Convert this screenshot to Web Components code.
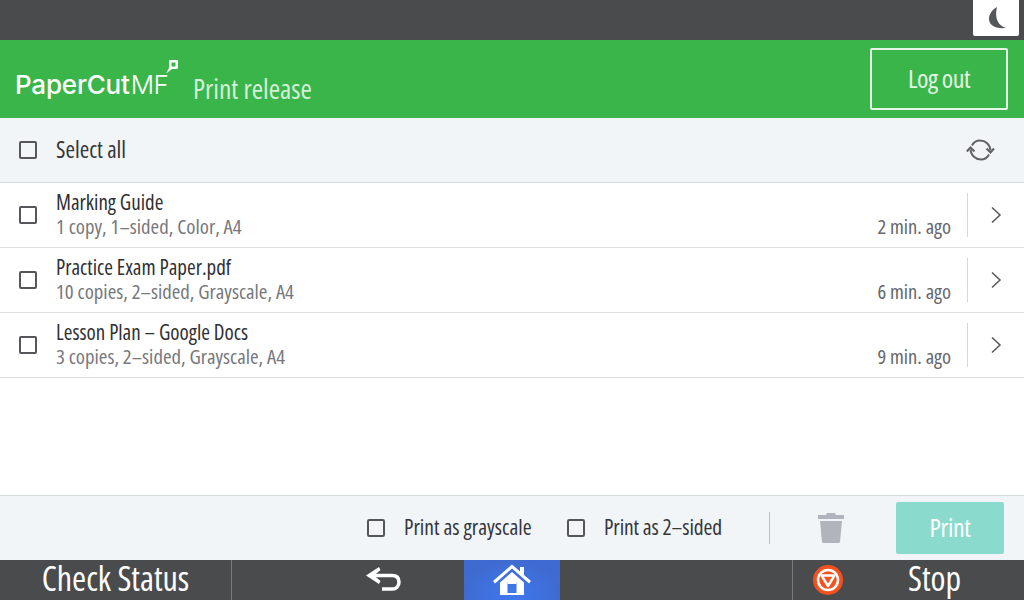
<!DOCTYPE html>
<html>
<head>
<meta charset="utf-8">
<title>Print release</title>
<style>
  html, body { margin: 0; padding: 0; }
  body {
    width: 1024px; height: 600px; overflow: hidden; background: #fff;
    display: flex; flex-direction: column;
    font-family: "Open Sans", "Liberation Sans", sans-serif;
    font-stretch: 75%;
    color: #2f3033;
  }
</style>
</head>
<body>
<top-bar></top-bar>
<app-header></app-header>
<select-row></select-row>
<job-list>
  <job-row name="Marking Guide" info="1 copy, 1–sided, Color, A4" age="2 min. ago"></job-row>
  <job-row name="Practice Exam Paper.pdf" info="10 copies, 2–sided, Grayscale, A4" age="6 min. ago"></job-row>
  <job-row name="Lesson Plan – Google Docs" info="3 copies, 2–sided, Grayscale, A4" age="9 min. ago"></job-row>
</job-list>
<action-bar></action-bar>
<system-bar></system-bar>

<script>
// small helper, every element just sets its shadow markup
class Base extends HTMLElement {
  connectedCallback() {
    this.attachShadow({ mode: "open" });
    this.shadowRoot.innerHTML = this.render();
  }
}

class CheckBox extends Base {
  render() {
    return `<style>
      :host { display: block; width: 18px; height: 18px; box-sizing: border-box;
        border: 2px solid #55565a; border-radius: 2px; background: transparent; flex: none; }
    </style>`;
  }
}

class TopBar extends Base {
  render() {
    return `<style>
      :host { display: flex; justify-content: flex-end; height: 40px; background: #4a4b4d; padding-right: 5px; box-sizing: border-box; }
      .moon { width: 46px; height: 36px; background: #fff; border-radius: 0 0 2px 2px;
        display: flex; align-items: center; justify-content: center; }
      svg { margin-left: 2px; }
    </style>
    <div class="moon"><svg width="19" height="24" viewBox="0 0 19 24">
      <path fill="#55565a" d="M9 1C3.500 4 1 9 1 13c0 6 6 10 17 9C11 20 6 13 9 1z"/>
    </svg></div>`;
  }
}

class AppHeader extends Base {
  render() {
    return `<style>
      :host { display: flex; align-items: stretch; height: 78px; background: #3ab54a; padding: 8px 16px 8px 15px; box-sizing: border-box; }
      .logo { position: relative; width: 178px; flex: none; font-family: "Inter", sans-serif; font-stretch: normal; color: #fff; font-size: 26px; line-height: 32px;
        align-self: flex-start; margin-top: 21px; white-space: nowrap; }
      .logo b { font-weight: 500; letter-spacing: -0.2px; }
      .logo span { font-weight: 300; margin-left: 1px; letter-spacing: -0.5px; }
      .flag { position: absolute; left: 150px; top: -9px; }
      h1 { margin: 23px 0 0 0; font-weight: 400; font-size: 27.500px; line-height: 36px; color: #d4f0d8; white-space: nowrap; }
      button { margin-left: auto; width: 138px; height: 62px; background: transparent; box-sizing: border-box;
        border: 2px solid #e4f5e6; border-radius: 2px; color: #e4f5e6; font: inherit; font-size: 26px; letter-spacing: -0.5px; padding: 0 0 3px; }
    </style>
    <div class="logo"><b>PaperCut</b><span>MF</span>
      <svg class="flag" width="14" height="14" viewBox="0 0 14 14">
        <path fill="#fff" fill-rule="evenodd" d="M4 0h9v8l-1 1H7L1 13.500 4 8zM6.500 2.500v4h4v-4z"/>
      </svg>
    </div>
    <h1>Print release</h1>
    <button>Log out</button>`;
  }
}

class SelectRow extends Base {
  render() {
    return `<style>
      :host { display: flex; align-items: center; height: 65px; box-sizing: border-box; background: #f2f5f7;
        border-bottom: 1px solid #d5dadd; padding: 0 29px 0 19px; }
      span { margin-left: 19px; font-size: 23px; line-height: 30px; padding-bottom: 2px; color: #35363a; }
      svg { margin-left: auto; }
    </style>
    <check-box></check-box><span>Select all</span>
    <svg width="29" height="24" viewBox="0 0 29 24" fill="none" stroke="#616266" stroke-width="2">
      <path d="M6 7.500C7.500 4.500 10.500 2.500 14 2.500c5.500 0 10 4 10.500 10"/>
      <path d="M23 16.500C21.500 19.500 18.500 21.500 15 21.500c-5.500 0-10-4-10.500-10"/>
      <path d="M20.500 10.500l4 4 3.500-4M0.800 13.500l3.700-4 4 4"/>
    </svg>`;
  }
}

class JobList extends Base {
  render() {
    return `<style>:host { display: block; flex: 1; }</style><slot></slot>`;
  }
}

class JobRow extends Base {
  render() {
    const name = this.getAttribute("name");
    const info = this.getAttribute("info");
    const age = this.getAttribute("age");
    return `<style>
      :host { display: flex; align-items: center; height: 65px; box-sizing: border-box; border-bottom: 1px solid #dcdfe1; padding-left: 19px; background: #fff; }
      .text { margin-left: 19px; flex: 1; padding-bottom: 3px; white-space: nowrap; }
      .name { font-size: 21px; line-height: 24px; color: #2f3033; }
      .info { font-size: 20.800px; line-height: 24px; color: #77787c; }
      .age { font-size: 20.500px; line-height: 24px; color: #66676b; align-self: flex-end; margin-bottom: 9px; margin-right: 16px; white-space: nowrap; }
      .more { width: 56px; height: 44px; border-left: 1px solid #d5d7d9; display: flex; align-items: center; justify-content: center; margin-bottom: 1px; }
    </style>
    <check-box></check-box>
    <div class="text"><div class="name">${name}</div><div class="info">${info}</div></div>
    <div class="age">${age}</div>
    <div class="more"><svg width="12" height="18" viewBox="0 0 12 18" fill="none" stroke="#55565a" stroke-width="1.500"><path d="M2 1.500L10 9l-8 7.500"/></svg></div>`;
  }
}

class ActionBar extends Base {
  render() {
    return `<style>
      :host { display: flex; align-items: center; height: 65px; box-sizing: border-box; background: #f2f5f7;
        border-top: 1px solid #d5dadd; padding: 0 20px 0 367px; }
      span { margin-left: 19px; font-size: 21.500px; line-height: 28px; padding-bottom: 2px; color: #35363a; white-space: nowrap; }
      .one { width: 144px; margin-right: 19px; }
      .two { width: 118px; letter-spacing: -0.1px; }
      .sep { width: 1px; height: 32px; background: #c0c3c6; margin-left: 47px; }
      svg { margin-left: 48px; }
      button { margin-left: auto; width: 108px; height: 52px; border: 0; border-radius: 2px; background: #8adbce;
        color: #fff; font: inherit; font-size: 26px; letter-spacing: -0.4px; padding: 0 0 3px; }
    </style>
    <check-box></check-box><span class="one">Print as grayscale</span>
    <check-box></check-box><span class="two">Print as 2–sided</span>
    <div class="sep"></div>
    <svg width="26" height="30" viewBox="0 0 26 30">
      <path fill="#b1b4bd" d="M9 0h8l1 2h8v4H0V2h8zM2 8h22l-2 21-1 1H5l-1-1z"/>
    </svg>
    <button>Print</button>`;
  }
}

class SystemBar extends Base {
  render() {
    return `<style>
      :host { display: flex; height: 40px; background: #4a4b4d; color: #fff; font-size: 34px; line-height: 36px; }
      .check { width: 231px; border-right: 1px solid #77787a; text-align: center; }
      .back { width: 232px; display: flex; align-items: center; justify-content: flex-end; padding-right: 62px; box-sizing: border-box; }
      .home { width: 96px; display: flex; align-items: center; justify-content: center;
        background: radial-gradient(ellipse at 50% 85%, #3f78f0 0%, #3f6bd0 70%); }
      .space { width: 232px; }
      .stop { flex: 1; display: flex; align-items: center; border-left: 1px solid #77787a; padding-left: 20px; }
      .stop span { margin-left: 65px; align-self: flex-start; }
    </style>
    <div class="check">Check Status</div>
    <div class="back"><svg width="36" height="28" viewBox="0 0 36 28" fill="none" stroke="#fff" stroke-width="3.500">
      <path d="M6 9.500h20c4.500 0 7 2.500 7 6.500s-2.500 7-7 7H16"/><path fill="#fff" stroke="none" d="M0 9.500L13 1l1.500 3L8 9.500l6.500 5.500-1.500 3z"/>
    </svg></div>
    <div class="home"><svg width="38" height="32" viewBox="0 0 38 32">
      <path fill="#fff" d="M19 0.500l8 7V3h4v8L38 17l-2 2.500L19 4.500 2 19.500 0 17z"/>
      <path fill="#fff" fill-rule="evenodd" d="M19 8l12 10.500V31H7V18.500zM14.500 18v11h9V18z"/>
      <path fill="#fff" d="M14.500 18h9v2h-9z"/>
    </svg></div>
    <div class="space"></div>
    <div class="stop"><svg width="30" height="30" viewBox="0 0 30 30">
      <circle cx="15" cy="15" r="15" fill="#f4511e"/>
      <circle cx="15" cy="15" r="10" fill="none" stroke="#fff" stroke-width="2.500"/>
      <path fill="none" stroke="#fff" stroke-width="2.500" stroke-linejoin="round" d="M8.500 10.500h13L15 21z"/>
    </svg><span>Stop</span></div>`;
  }
}

customElements.define("check-box", CheckBox);
customElements.define("top-bar", TopBar);
customElements.define("app-header", AppHeader);
customElements.define("select-row", SelectRow);
customElements.define("job-list", JobList);
customElements.define("job-row", JobRow);
customElements.define("action-bar", ActionBar);
customElements.define("system-bar", SystemBar);
</script>
</body>
</html>
